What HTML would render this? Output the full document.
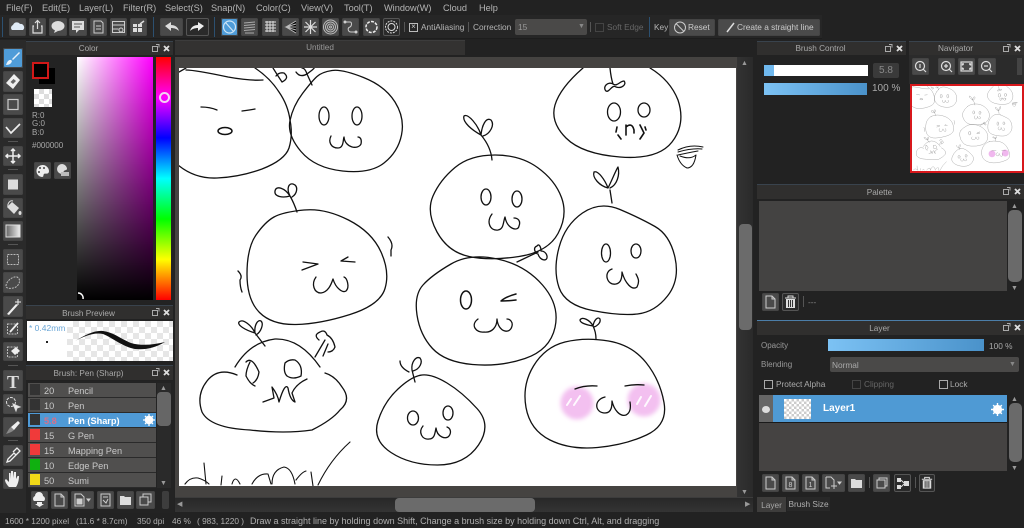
<!DOCTYPE html>
<html style="background:#222"><head><meta charset="utf-8"><title>MediBang</title>
<style>
html,body{margin:0;padding:0;background:#222;width:1024px;height:528px;overflow:hidden}
body{position:relative;font-family:"Liberation Sans","DejaVu Sans",sans-serif;font-size:8.3px;color:#bbb;filter:blur(.3px)}
.a{position:absolute}
.t{position:absolute;white-space:nowrap;line-height:12px}
.b{position:absolute;background:#4a4a4a;border-radius:2px;box-shadow:inset 0 0 0 1px #444}
.b svg,.f{position:absolute;left:0;top:0;width:100%;height:100%}
.d{background:#2a2a2a;box-shadow:inset 0 0 0 1px #555}
.tb{position:absolute;background:#302f2e;border-top:1px solid #39434d;color:#aaa;text-align:center;line-height:14px;font-size:8.2px;padding-right:22px;box-sizing:border-box}
.ctl{position:absolute;top:1px;right:3px;width:20px;height:12px}
.row{position:absolute;left:28px;width:128px;height:14px;background:#504f4e;border-bottom:1px solid #2a2a2a;color:#c8c8c8;font-size:9.2px;line-height:14px}
.row i{position:absolute;left:2px;top:1px;width:10px;height:11px;background:#333;display:block}
.row b{position:absolute;left:16px;top:1px;font-weight:normal}
.row u{position:absolute;left:40px;top:1px;text-decoration:none}
.cb{position:absolute;width:7px;height:7px;border:1px solid #aaa}
</style></head><body>

<!-- menu -->
<div class="t" style="left:6px;top:2px;font-size:9.2px;color:#b5b5b5">File(F)</div>
<div class="t" style="left:42px;top:2px;font-size:9.2px;color:#b5b5b5">Edit(E)</div>
<div class="t" style="left:79px;top:2px;font-size:9.2px;color:#b5b5b5">Layer(L)</div>
<div class="t" style="left:123px;top:2px;font-size:9.2px;color:#b5b5b5">Filter(R)</div>
<div class="t" style="left:165px;top:2px;font-size:9.2px;color:#b5b5b5">Select(S)</div>
<div class="t" style="left:211px;top:2px;font-size:9.2px;color:#b5b5b5">Snap(N)</div>
<div class="t" style="left:256px;top:2px;font-size:9.2px;color:#b5b5b5">Color(C)</div>
<div class="t" style="left:301px;top:2px;font-size:9.2px;color:#b5b5b5">View(V)</div>
<div class="t" style="left:344px;top:2px;font-size:9.2px;color:#b5b5b5">Tool(T)</div>
<div class="t" style="left:384px;top:2px;font-size:9.2px;color:#b5b5b5">Window(W)</div>
<div class="t" style="left:443px;top:2px;font-size:9.2px;color:#b5b5b5">Cloud</div>
<div class="t" style="left:479px;top:2px;font-size:9.2px;color:#b5b5b5">Help</div>

<!-- toolbar -->
<div class="a" style="left:0;top:15px;width:822px;height:23px;background:#262626;border-bottom:1px solid #1d1d1d"></div>
<div class="a" style="left:2px;top:17px;width:1px;height:20px;background:#2c5070"></div>
<div class="a" style="left:153px;top:17px;width:1px;height:20px;background:#2c5070"></div>
<div class="a" style="left:214px;top:17px;width:1px;height:20px;background:#2c5070"></div>
<div class="a" style="left:649px;top:17px;width:1px;height:20px;background:#2c5070"></div>

<div class="b" style="left:9px;top:18px;width:17px;height:18px"><svg viewBox="0 0 17 18"><path d="M3 12a3 3 0 0 1 1-5 4 4 0 0 1 7-1 3.5 3.5 0 0 1 3 6z" fill="#dfeaf5"/></svg></div>
<div class="b" style="left:29px;top:18px;width:17px;height:18px"><svg viewBox="0 0 17 18" fill="none" stroke="#ddd" stroke-width="1.2"><path d="M5 8H4v7h9V8h-1M8.500 11V3M6 5l2.500-2.500L11 5"/></svg></div>
<div class="b" style="left:49px;top:18px;width:18px;height:18px"><svg viewBox="0 0 18 18"><ellipse cx="9" cy="8" rx="6.500" ry="5" fill="#ddd"/><path d="M6 12l-1 3 4-2z" fill="#ddd"/></svg></div>
<div class="b" style="left:69px;top:18px;width:18px;height:18px"><svg viewBox="0 0 18 18"><path d="M3 3h12v9h-5l-3 3v-3H3z" fill="#ddd"/><path d="M5 6h8M5 9h6" stroke="#555"/></svg></div>
<div class="b" style="left:90px;top:18px;width:17px;height:18px"><svg viewBox="0 0 17 18" fill="none" stroke="#ccc"><path d="M4 3h7l2 2v10H4zM6 8h5M6 11h5"/></svg></div>
<div class="b" style="left:110px;top:18px;width:17px;height:18px"><svg viewBox="0 0 17 18" fill="none" stroke="#ccc"><path d="M2.500 3.500h12v11h-12zM2.500 7h12M2.500 11h6"/><circle cx="11" cy="12" r="2"/></svg></div>
<div class="b" style="left:130px;top:18px;width:17px;height:18px"><svg viewBox="0 0 17 18"><path d="M3 6h4v3H3zM8 6h4v3H8zM3 10h4v4H3zM8 10h4v4H8z" fill="#ddd"/><path d="M10 6l4-3" stroke="#ddd" stroke-width="1.500"/></svg></div>
<div class="b" style="left:160px;top:18px;width:23px;height:18px"><svg viewBox="0 0 23 18"><path d="M5 8l6-4v3c4 0 7 2 8 6-2-2-5-3-8-3v3z" fill="#ddd"/></svg></div>
<div class="b d" style="left:186px;top:18px;width:23px;height:18px"><svg viewBox="0 0 23 18"><path d="M18 8l-6-4v3c-4 0-7 2-8 6 2-2 5-3 8-3v3z" fill="#eee"/></svg></div>
<div class="b" style="left:221px;top:18px;width:17px;height:18px;background:#4f9cd8"><svg viewBox="0 0 17 18" fill="none" stroke="#cde4f5" stroke-width="1.200"><circle cx="8.500" cy="9" r="6"/><path d="M4.500 4.500l8 9"/></svg></div>
<div class="b" style="left:241px;top:18px;width:17px;height:18px"><svg viewBox="0 0 17 18" stroke="#aaa"><path d="M3 5l11-1M3 7.500l11-1M3 10l11-1M3 12.500l11-1M4 15h9"/></svg></div>
<div class="b" style="left:262px;top:18px;width:17px;height:18px"><svg viewBox="0 0 17 18" stroke="#ddd"><path d="M3 4h11M3 7h11M3 10h11M3 13h11M5 3v11M8 3v11M11 3v11"/></svg></div>
<div class="b" style="left:282px;top:18px;width:17px;height:18px"><svg viewBox="0 0 17 18" stroke="#bbb"><path d="M14 3L4 9l10 6M14 6L4 9l10 3M14 9H4"/></svg></div>
<div class="b" style="left:302px;top:18px;width:17px;height:18px"><svg viewBox="0 0 17 18" stroke="#ddd" stroke-width="1.200"><path d="M8.500 2v14M2 9h13M3.500 4l10 10M13.500 4l-10 10"/></svg></div>
<div class="b" style="left:322px;top:18px;width:17px;height:18px"><svg viewBox="0 0 17 18" fill="none" stroke="#bbb"><circle cx="8.500" cy="9" r="7"/><circle cx="8.500" cy="9" r="5"/><circle cx="8.500" cy="9" r="3"/><circle cx="8.500" cy="9" r="1"/></svg></div>
<div class="b" style="left:342px;top:18px;width:17px;height:18px"><svg viewBox="0 0 17 18" fill="none" stroke="#ccc"><path d="M3 4h5c2 0 2 4 0 5-3 1-2 5 1 5h5"/><circle cx="3" cy="4" r="1" fill="#ddd"/><circle cx="14" cy="14" r="1" fill="#ddd"/></svg></div>
<div class="b" style="left:363px;top:18px;width:17px;height:18px"><svg viewBox="0 0 17 18" fill="none" stroke="#eee" stroke-width="1.500"><circle cx="8.500" cy="9" r="5.500" stroke-dasharray="3 1.200"/></svg></div>
<div class="b d" style="left:383px;top:18px;width:17px;height:18px"><svg viewBox="0 0 17 18" fill="none" stroke="#ddd"><circle cx="8.500" cy="9" r="6" stroke-dasharray="2 1"/><circle cx="8.500" cy="9" r="3.500"/></svg></div>
<div class="a" style="left:404px;top:22px;width:1px;height:10px;background:#555"></div>
<div class="cb" style="left:409px;top:23px;border-color:#bbb;width:7px;height:7px"></div>
<div class="t" style="left:409px;top:21px;color:#ccc;font-size:8px;width:9px;text-align:center">×</div>
<div class="t" style="left:421px;top:21px;color:#b5b5b5">AntiAliasing</div>
<div class="a" style="left:468px;top:22px;width:1px;height:10px;background:#555"></div>
<div class="t" style="left:473px;top:21px;color:#b5b5b5">Correction</div>
<div class="a" style="left:515px;top:19px;width:72px;height:16px;background:#4a4948;border-radius:2px"></div>
<div class="t" style="left:518px;top:21px;color:#999">15</div>
<div class="t" style="left:578px;top:21px;color:#888;font-size:7px">▼</div>
<div class="a" style="left:590px;top:22px;width:1px;height:10px;background:#555"></div>
<div class="cb" style="left:595px;top:23px;border-color:#444"></div>
<div class="t" style="left:607px;top:21px;color:#666">Soft Edge</div>
<div class="t" style="left:654px;top:21px;color:#b5b5b5">Key</div>
<div class="b" style="left:669px;top:19px;width:46px;height:17px"><svg viewBox="0 0 46 17" fill="none" stroke="#ccc" style="width:46px;height:17px"><circle cx="11" cy="8.500" r="5.500"/><path d="M7 4.500l8 8"/></svg></div>
<div class="t" style="left:688px;top:21px;color:#ccc">Reset</div>
<div class="b" style="left:718px;top:19px;width:102px;height:17px"></div>
<svg class="a" style="left:724px;top:21px;width:14px;height:13px" viewBox="0 0 14 13"><path d="M3 11L10 2" stroke="#ddd" stroke-width="1.500"/></svg>
<div class="t" style="left:737px;top:21px;color:#ccc">Create a straight line</div>

<!-- tool strip -->
<div class="a" style="left:0;top:40px;width:26px;height:473px;background:#2a2a2a"></div>
<div class="b" style="left:3px;top:48px;width:20px;height:20px;background:#4f9cd8"><svg viewBox="0 0 20 20"><path d="M3 17Q5 11 8 12L9 13Q8 17 3 17ZM9 11L16 4L17 5L10 12Z" fill="#e8f2fa"/></svg></div>
<div class="b" style="left:3px;top:71px;width:20px;height:21px"><svg viewBox="0 0 20 21"><path d="M11 3l6 6-7 9-7-6z" fill="#eee"/><path d="M10.500 8l2.500 2-3 3-2.500-2z" fill="#666"/></svg></div>
<div class="b" style="left:3px;top:94px;width:20px;height:21px"><svg viewBox="0 0 20 21" fill="none" stroke="#ccc" stroke-width="1.200"><rect x="5" y="5.500" width="10" height="10"/></svg></div>
<div class="b" style="left:3px;top:118px;width:20px;height:20px"><svg viewBox="0 0 20 20" fill="none" stroke="#eee" stroke-width="1.700"><path d="M3 9l5 6 9-9"/></svg></div>
<div class="a" style="left:8px;top:141px;width:10px;height:1px;background:#555"></div>
<div class="b" style="left:3px;top:146px;width:20px;height:20px"><svg viewBox="0 0 20 20" fill="none" stroke="#eee" stroke-width="1.500"><path d="M10 3v14M3 10h14M8 5l2-2 2 2M8 15l2 2 2-2M5 8l-2 2 2 2M15 8l2 2-2 2"/></svg></div>
<div class="a" style="left:8px;top:169px;width:10px;height:1px;background:#555"></div>
<div class="b" style="left:3px;top:174px;width:20px;height:21px"><svg viewBox="0 0 20 21"><rect x="5" y="5.500" width="10" height="10" fill="#ddd"/></svg></div>
<div class="b" style="left:3px;top:198px;width:20px;height:20px"><svg viewBox="0 0 20 20"><path d="M4 9l5-5 7 6-5 6z" fill="#ddd"/><path d="M5 9a4 5 0 0 1 5-6" fill="none" stroke="#ddd"/><ellipse cx="17" cy="15" rx="1.500" ry="2" fill="#ddd"/></svg></div>
<div class="b" style="left:3px;top:221px;width:20px;height:20px"><svg viewBox="0 0 20 20"><defs><linearGradient id="g1"><stop offset="0" stop-color="#666"/><stop offset="1" stop-color="#eee"/></linearGradient></defs><rect x="3" y="4" width="14" height="12" fill="url(#g1)" stroke="#ddd"/></svg></div>
<div class="a" style="left:8px;top:244px;width:10px;height:1px;background:#555"></div>
<div class="b" style="left:3px;top:249px;width:20px;height:21px"><svg viewBox="0 0 20 21" fill="none" stroke="#bbb" stroke-dasharray="2 1"><rect x="4.500" y="5.500" width="11" height="10"/></svg></div>
<div class="b" style="left:3px;top:272px;width:20px;height:21px"><svg viewBox="0 0 20 21" fill="none" stroke="#bbb" stroke-dasharray="2 1"><path d="M3 14c0-4 6-10 11-9 4 2 3 7-1 10-4 2-10 2-10-1z"/></svg></div>
<div class="b" style="left:3px;top:296px;width:20px;height:21px"><svg viewBox="0 0 20 21"><path d="M4 18L13 8l2 1-9 10z" fill="#eee"/><path d="M15 3v3M12 6h6M15 6v3" stroke="#eee"/></svg></div>
<div class="b" style="left:3px;top:319px;width:20px;height:19px"><svg viewBox="0 0 20 19" fill="none" stroke="#bbb" stroke-dasharray="2 1"><rect x="4.500" y="5" width="10" height="10"/><path d="M7 13l8-9" stroke="#eee" stroke-width="1.800" stroke-dasharray="none"/></svg></div>
<div class="b" style="left:3px;top:342px;width:20px;height:19px"><svg viewBox="0 0 20 19" fill="none" stroke="#bbb" stroke-dasharray="2 1"><rect x="4.500" y="5" width="10" height="10"/><path d="M8 9l5-4 4 4-5 4z" fill="#eee" stroke="none"/></svg></div>
<div class="a" style="left:8px;top:365px;width:10px;height:1px;background:#555"></div>
<div class="b" style="left:3px;top:370px;width:20px;height:21px"><div class="t" style="left:0;width:20px;text-align:center;top:2px;line-height:18px;font:bold 18px 'Liberation Serif',serif;color:#ddd">T</div></div>
<div class="b" style="left:3px;top:394px;width:20px;height:20px"><svg viewBox="0 0 20 20" fill="none" stroke="#ddd"><circle cx="8" cy="8" r="4.500" stroke-dasharray="3 1"/><path d="M10 10l7 3-3 1-1 3z" fill="#eee"/></svg></div>
<div class="b" style="left:3px;top:417px;width:20px;height:20px"><svg viewBox="0 0 20 20"><path d="M3 17c2-3 3-6 5-7l3 3c-2 2-5 3-8 4z" fill="#888"/><path d="M8 10l7-6 2 2-6 7z" fill="#eee"/></svg></div>
<div class="a" style="left:8px;top:440px;width:10px;height:1px;background:#555"></div>
<div class="b" style="left:3px;top:445px;width:20px;height:21px"><svg viewBox="0 0 20 21" fill="none" stroke="#eee" stroke-width="1.300"><path d="M4 17l1-3 6-6 2 2-6 6zM10 7l4-4 3 3-4 4"/></svg></div>
<div class="b" style="left:3px;top:469px;width:20px;height:20px"><svg viewBox="0 0 20 20" fill="#eee"><path d="M6 18c-2-2-4-5-4-7l1-1 3 3 0-9h1.500l.5 6V2h2l.5 7 .5-6h2l0 7 1.500-3h1.500c0 4-1 8-3 11z"/></svg></div>

<!-- colour panel -->
<div class="tb" style="left:26px;top:41px;width:147px;height:14px">Color
<svg class="ctl" viewBox="0 0 20 12"><path d="M2.500 3.500h5v5h-5zM6 1.500h3v3" fill="none" stroke="#aaa"/><path d="M14 3l5 5M19 3l-5 5" stroke="#ddd" stroke-width="1.800"/></svg></div>
<div class="a" style="left:26px;top:55px;width:148px;height:249px;background:#232323"></div>
<div class="a" style="left:39px;top:68px;width:16px;height:16px;background:#000"></div>
<div class="a" style="left:32px;top:62px;width:13px;height:13px;background:#000;border:2px solid #d01818"></div>
<div class="a" style="left:34px;top:89px;width:18px;height:18px;background:#fff;background-image:linear-gradient(45deg,#ddd 25%,transparent 25%,transparent 75%,#ddd 75%),linear-gradient(45deg,#ddd 25%,transparent 25%,transparent 75%,#ddd 75%);background-size:10px 10px;background-position:0 0,5px 5px"></div>
<div class="t" style="left:32px;top:110px;color:#a8a8a8;font-size:8px">R:0</div>
<div class="t" style="left:32px;top:118px;color:#a8a8a8;font-size:8px">G:0</div>
<div class="t" style="left:32px;top:127px;color:#a8a8a8;font-size:8px">B:0</div>
<div class="t" style="left:32px;top:140px;color:#a8a8a8;font-size:8px">#000000</div>
<div class="b" style="left:34px;top:162px;width:17px;height:17px"><svg viewBox="0 0 17 17"><path d="M9 3a6 6 0 1 0-1 12c2 0 1-2 2-3s5 1 5-3c0-3-3-6-6-6z" fill="#eee"/><circle cx="6" cy="6" r="1" fill="#444"/><circle cx="10" cy="6" r="1" fill="#444"/><circle cx="5" cy="10" r="1" fill="#444"/></svg></div>
<div class="b" style="left:54px;top:162px;width:17px;height:17px"><svg viewBox="0 0 17 17"><path d="M8 2a5 5 0 1 0 0 10c2-1 1-2 2-3s3-1 3-2c0-3-3-5-5-5z" fill="#ddd"/><rect x="7" y="10" width="8" height="4" fill="#bbb"/></svg></div>
<div class="a" style="left:77px;top:57px;width:76px;height:243px;background:linear-gradient(to bottom,rgba(0,0,0,0),#000),linear-gradient(to right,#fff,#f0f)"></div>
<svg class="a" style="left:77px;top:292px;width:10px;height:8px" viewBox="0 0 10 8"><path d="M1 1a5 5 0 0 1 5 6" fill="none" stroke="#fff" stroke-width="1.500"/></svg>
<div class="a" style="left:156px;top:57px;width:15px;height:243px;background:linear-gradient(to bottom,#f00 0%,#f0f 16.7%,#00f 33.3%,#0ff 50%,#0f0 66.7%,#ff0 83.3%,#f00 100%)"></div>
<div class="a" style="left:159px;top:92px;width:7px;height:7px;border:2px solid #f4d0f4;border-radius:50%"></div>

<!-- brush preview -->
<div class="tb" style="left:26px;top:305px;width:147px;height:14px;line-height:15px">Brush Preview
<svg class="ctl" viewBox="0 0 20 12"><path d="M2.500 3.500h5v5h-5zM6 1.500h3v3" fill="none" stroke="#aaa"/><path d="M14 3l5 5M19 3l-5 5" stroke="#ddd" stroke-width="1.800"/></svg></div>
<div class="a" style="left:27px;top:321px;width:40px;height:40px;background:#fff"></div>
<div class="t" style="left:29px;top:322px;color:#6aa6d6;font-size:8.500px">* 0.42mm</div>
<div class="a" style="left:46px;top:341px;width:2px;height:2px;background:#222"></div>
<div class="a" style="left:67px;top:321px;width:106px;height:40px;background:#fff;background-image:linear-gradient(45deg,#e6e6e6 25%,transparent 25%,transparent 75%,#e6e6e6 75%),linear-gradient(45deg,#e6e6e6 25%,transparent 25%,transparent 75%,#e6e6e6 75%);background-size:12px 12px;background-position:0 0,6px 6px"></div>
<svg class="a" style="left:67px;top:321px;width:106px;height:40px" viewBox="0 0 106 40"><path d="M8 20C18 14 28 9 36 10C46 11 54 18 64 22C74 25 86 24 98 21C88 27 78 29 68 28C56 26 46 17 36 13C26 11 16 16 8 20Z" fill="#111"/></svg>

<!-- brush list -->
<div class="tb" style="left:26px;top:365px;width:147px;height:15px;line-height:15px">Brush: Pen (Sharp)
<svg class="ctl" viewBox="0 0 20 12"><path d="M2.500 3.500h5v5h-5zM6 1.500h3v3" fill="none" stroke="#aaa"/><path d="M14 3l5 5M19 3l-5 5" stroke="#ddd" stroke-width="1.800"/></svg></div>
<div class="a" style="left:26px;top:381px;width:148px;height:132px;background:#232323"></div>
<div class="row" style="top:383px"><i></i><b>20</b><u>Pencil</u></div>
<div class="row" style="top:398px"><i></i><b>10</b><u>Pen</u></div>
<div class="row" style="top:413px;background:#4f9ad6;color:#fff;font-weight:bold"><i></i><b style="color:#d87088;font-weight:bold">5.8</b><u>Pen (Sharp)</u><svg class="a" style="left:115px;top:1px;width:12px;height:12px" viewBox="0 0 12 12"><circle cx="6" cy="6" r="3" fill="none" stroke="#fff" stroke-width="2.500"/><path d="M6 0v12M0 6h12M2 2l8 8M10 2l-8 8" stroke="#fff" stroke-width="1.300"/></svg></div>
<div class="row" style="top:428px"><i style="background:#f03a3a"></i><b>15</b><u>G Pen</u></div>
<div class="row" style="top:443px"><i style="background:#f03a3a"></i><b>15</b><u>Mapping Pen</u></div>
<div class="row" style="top:458px"><i style="background:#10b010"></i><b>10</b><u>Edge Pen</u></div>
<div class="row" style="top:473px"><i style="background:#f0d818"></i><b>50</b><u>Sumi</u></div>
<div class="a" style="left:157px;top:383px;width:14px;height:105px;background:#2a2a2a"></div>
<div class="a" style="left:157px;top:392px;width:14px;height:34px;background:#666;border-radius:4px"></div>
<div class="t" style="left:160px;top:383px;font-size:7px;color:#999">▲</div>
<div class="t" style="left:160px;top:478px;font-size:7px;color:#999">▼</div>
<div class="b" style="left:31px;top:491px;width:17px;height:18px"><svg viewBox="0 0 17 18"><path d="M3 10a3 3 0 0 1 1-5 4 4 0 0 1 8 0 3 3 0 0 1 1 5z" fill="#eee"/><path d="M6 11h5v2h2l-4.500 3L4 13h2z" fill="#eee"/></svg></div>
<div class="b" style="left:51px;top:491px;width:17px;height:18px"><svg viewBox="0 0 17 18" fill="none" stroke="#ccc"><path d="M4 3h6l3 3v9H4zM10 3v3h3"/></svg></div>
<div class="b" style="left:71px;top:491px;width:23px;height:18px"><svg viewBox="0 0 23 18" fill="none" stroke="#ccc"><path d="M4 3h6l3 3v9H4z"/><rect x="6" y="8" width="5" height="5" fill="#ccc"/><path d="M16 8l3 0-1.500 2z" fill="#ddd"/></svg></div>
<div class="b" style="left:97px;top:491px;width:17px;height:18px"><svg viewBox="0 0 17 18" fill="none" stroke="#ccc"><path d="M4 3h9v12H4zM6 6h5M6 9l3 3 2-4"/></svg></div>
<div class="b" style="left:117px;top:491px;width:17px;height:18px"><svg viewBox="0 0 17 18"><path d="M3 5h4l1 1h6v8H3z" fill="#ddd"/></svg></div>
<div class="b" style="left:136px;top:491px;width:19px;height:18px"><svg viewBox="0 0 19 18" fill="none" stroke="#ccc"><path d="M4 6h8v8H4zM7 6V3h8v8h-3"/></svg></div>
<div class="a" style="left:162px;top:491px;width:7px;height:18px;background:#3d3d3d;border-radius:2px"></div>

<!-- canvas area -->
<div class="a" style="left:175px;top:40px;width:290px;height:14px;background:#333231;color:#999;text-align:center;line-height:14px;font-size:8.2px;border-top:1px solid #3c3c3c">Untitled</div>
<div class="a" style="left:175px;top:57px;width:578px;height:440px;background:#454341"></div>
<div class="a" style="left:179px;top:68px;width:557px;height:418px;background:#fff;overflow:hidden"></div>
<!-- scrollbars -->
<div class="a" style="left:737px;top:57px;width:16px;height:440px;background:linear-gradient(to right,#333,#2a2a2a)"></div>
<div class="a" style="left:739px;top:224px;width:13px;height:106px;background:#6b6b6b;border-radius:4px"></div>
<div class="t" style="left:741px;top:58px;font-size:7px;color:#999">▲</div>
<div class="t" style="left:741px;top:487px;font-size:7px;color:#999">▼</div>
<div class="a" style="left:175px;top:497px;width:578px;height:15px;background:linear-gradient(to bottom,#282828,#343434);border-top:1px solid #3c3c3c;box-sizing:border-box"></div>
<div class="a" style="left:395px;top:498px;width:140px;height:14px;background:#6b6b6b;border-radius:4px"></div>
<div class="t" style="left:177px;top:499px;font-size:7px;color:#999">◀</div>
<div class="t" style="left:745px;top:499px;font-size:7px;color:#999">▶</div>

<!-- drawing -->
<svg class="a" style="left:179px;top:68px;width:557px;height:418px;overflow:hidden" viewBox="179 68 557 418">
<defs><filter id="bl" x="-30%" y="-30%" width="160%" height="160%"><feGaussianBlur stdDeviation="2"/></filter>
<g id="art" fill="none" stroke="#111" stroke-width="1.300" stroke-linecap="round" stroke-linejoin="round">
<!-- A -->
<path d="M255,68Q270,78 279,92Q288,105 290,120Q293,135 289,148Q285,160 262,169Q240,177 217,178Q195,179 178,165" />
<path d="M186,70Q195,70 228,77Q250,81 263,80M179,72L186,68" />
<path d="M201,107Q210,107 217,110M242,111Q250,110 255,109" />
<ellipse cx="225" cy="131" rx="7" ry="3.500" stroke-width="1.500"/>
<path d="M273,68Q278,76 282,82Q290,78 284,73Q279,72 276,76M296,72Q300,78 307,74Q305,68 302,68M307,74Q315,68 314,68M307,74L312,85" />
<!-- B -->
<path d="M302.500,93.500Q293,106 290,120.500Q287,135 301,151.500Q315,168 342.500,171Q370,174 384,163Q398,152 401.500,135Q405,118 395,102Q385,86 363.500,77.500Q342,69 332,70.500Q322,72 317,76.500Q312,81 302.500,93.500Z" />
<ellipse cx="324" cy="116" rx="5" ry="9"/><ellipse cx="357" cy="116" rx="5" ry="9"/>
<path d="M331,136C328,142 331,148 338,148C344,148 343,139 344,137C345,148 358,150 361,144C362,139 360,137 358,137" />
<!-- C -->
<path d="M274,217Q283,212 304,210Q325,208 348.500,220Q372,232 381,252Q390,272 385,288.500Q380,305 350,314.500Q320,324 296,324.500Q272,325 259.500,312.500Q247,300 247,274Q247,248 256,235Q265,222 274,217Z" />
<path d="M297,212Q294,203 290,196M290,196C283,198 274,197 275,191C276,185 285,188 290,196M290,196C286,188 289,183 293,184C299,186 297,194 292,197" />
<path d="M303,262L318,264L302,270M348,257L341,261L355,262" />
<path d="M316,277C311,284 314,293 321,293C328,292 331,285 333,279C336,289 343,293 346,291C350,287 347,278 344,277" />
<path d="M238,271Q243,276 240,280Q240,287 242,292M388,237Q394,244 391,250L391,256" />
<!-- D -->
<path d="M455,167.500Q470,155 495,155Q520,155 537.500,167.500Q555,180 561.500,197.500Q568,215 558,233.500Q548,252 519,256.500Q490,261 469,256.500Q448,252 437,232Q426,212 433,196Q440,180 455,167.500Z" />
<path d="M492,160Q491,147 481,135M481,135C472,130 462,122 464,116C468,113 478,125 481,135M481,135C482,125 486,117 491,120C495,125 490,134 483,136" />
<ellipse cx="486" cy="197" rx="5" ry="8"/><ellipse cx="517" cy="199" rx="5" ry="8"/>
<path d="M492,214C486,222 490,231 498,230C504,229 503,222 505,217C507,229 518,232 519,226C521,221 518,218 514,218" />
<path d="M517,262L538,252M537,246C532,248 536,254 538,254C540,261 548,262 547,256C546,252 543,251 541,251C541,247 539,243 537,246" />
<!-- E -->
<path d="M583,68Q560,88 555,105Q550,122 566,138Q582,154 620,157Q658,160 672,142Q686,124 678,100Q670,80 650,68" />
<path d="M610,68Q611,78 613,84M606,91C602,87 608,81 613,84C617,87 620,81 624,81C627,84 622,89 616,87C612,84 609,93 606,91" />
<ellipse cx="614" cy="112" rx="6.500" ry="9"/><ellipse cx="644" cy="110" rx="6" ry="7"/>
<path d="M617,127L616,132M618,135L621,139M626,125L626,135M626,127Q632,122 634,130L634,133M640,125L644,133L640,139M645,127L646,130" stroke-width="1.600"/>
<path d="M678,150Q690,144 703,147M678,152Q692,148 702,149M678,155Q692,152 698,151M677,155Q680,165 687,168Q694,168 696,155Q690,160 680,156" stroke-width="1"/>
<!-- F -->
<path d="M620,209.500Q600,201 582.500,213Q565,225 559,247.500Q553,270 559,287.500Q565,305 592.500,310.500Q620,316 637.500,314Q655,312 667.500,296Q680,280 675,257.500Q670,235 655,226.500Q640,218 620,209.500Z" />
<path d="M612,203L610,190M608,188C600,186 592,178 594,172C598,170 605,180 608,188M608,188C612,180 616,170 618,167C620,175 617,185 610,188" />
<ellipse cx="606" cy="253" rx="4.500" ry="9"/><ellipse cx="636" cy="251" rx="5" ry="7"/>
<path d="M612,269C603,272 607,286 616,284C621,283 622,278 622,272C625,283 632,291 637,287C640,281 638,278 636,274" />
<!-- G -->
<path d="M423,285Q432,275 451,264Q470,253 497.500,259Q525,265 542.500,285Q560,305 555,327.500Q550,350 525,358.500Q500,367 472.500,364.500Q445,362 432.500,348.500Q420,335 417,315Q414,295 423,285Z" />
<ellipse cx="466" cy="300" rx="5.500" ry="9" stroke-width="1.500"/>
<path d="M516,294Q505,297 501,301Q508,301 516,300" stroke-width="1.500"/>
<path d="M478,319C470,325 476,333 484,332C492,333 497,327 497,319C498,332 510,335 512,326C513,322 510,319 507,319" />
<!-- H -->
<path d="M235,367Q250,342 275,339Q300,338 320,367" />
<path d="M237,375Q218,367 207,381Q196,395 202,412Q210,428 250,430Q285,434 312,430Q332,420 340,410Q352,400 342,387Q335,376 325,373" />
<path d="M265,346L255,333M255,333C245,330 237,325 239,322C243,318 252,326 255,333M255,333C254,325 258,319 261,321C264,324 261,332 256,335" />
<path d="M315,357L325,340M319,340Q313,335 320,332Q325,329 327,335Q333,338 335,347Q333,352 328,352M328,344L323,356" />
<path d="M250,362Q246,370 246,376Q250,384 255,386M246,362Q252,356 259,372Q258,380 253,383" />
<path d="M285,363Q283,372 287,376Q293,380 301,376Q303,365 295,360Q289,359 285,363Z" />
<path d="M263,402L274,398L272,387Q278,395 279,402Q285,382 288,388Q290,400 295,402L292,393Q296,384 307,379" />
<!-- I -->
<path d="M422,375Q412,376 398,389Q384,402 378,421Q372,440 391,452.500Q410,465 437.500,465Q465,465 478.500,445Q492,425 477,408.500Q462,392 447,383Q432,374 422,375Z" />
<path d="M415,382L412,370M409,372C403,369 400,365 400,361M412,370C411,362 416,356 420,358C423,362 420,369 413,371" />
<ellipse cx="413" cy="418" rx="5.500" ry="7"/><ellipse cx="448" cy="413" rx="5" ry="7"/>
<path d="M423,426C418,432 422,440 429,439C435,439 435,432 436,428C437,437 446,440 449,436C452,432 450,428 447,427" />
<!-- J -->
<path d="M565,342Q585,337 608.500,341Q632,345 646,362.500Q660,380 664,402.500Q668,425 646.500,435Q625,445 597.500,447.500Q570,450 550,440Q530,430 526,407.500Q522,385 533.500,366Q545,347 565,342Z" />
<path d="M596,339Q596,332 593,326M593,326C587,325 580,323 580,320C582,316 590,320 593,326M593,326C594,320 598,316 600,319C601,323 597,326 594,327" />
<path d="M575,389Q585,385 597,386M625,386Q635,384 644,385" />
<path d="M605,397C593,400 595,413 605,413C612,413 612,405 612,401C614,410 620,417 626,415C630,413 631,408 630,402" />
<!-- grass -->
<path d="M185,484Q190,477 198,478Q205,480 209,484M204,463L206,484M221,485L222,476M232,484Q235,474 240,484M252,484Q258,473 268,474L271,484M272,484Q272,470 284,467Q292,468 295,484M296,480Q302,472 306,471M311,472L313,486M318,485Q330,460 350,442" stroke-width="1.100"/>
</g></defs>
<circle cx="577" cy="403" r="16.500" fill="#f3c0f0" filter="url(#bl)"/>
<circle cx="644" cy="400" r="16.500" fill="#f3c0f0" filter="url(#bl)"/>
<path d="M567,405L571,399M574,405L580,396M637,404L641,397M645,406L651,396" stroke="#fff" stroke-width="2" fill="none" stroke-linecap="round" opacity=".9"/>
<use href="#art"/>
</svg>

<!-- status -->
<div class="t" style="left:5px;top:515px;font-size:8.3px;color:#b0b0b0">1600 * 1200 pixel</div>
<div class="t" style="left:76px;top:515px;font-size:8.3px;color:#b0b0b0">(11.6 * 8.7cm)</div>
<div class="t" style="left:137px;top:515px;font-size:8.3px;color:#b0b0b0">350 dpi</div>
<div class="t" style="left:172px;top:515px;font-size:8.3px;color:#b0b0b0">46 %</div>
<div class="t" style="left:197px;top:515px;font-size:8.3px;color:#b0b0b0">( 983, 1220 )</div>
<div class="t" style="left:250px;top:515px;font-size:9px;color:#b0b0b0">Draw a straight line by holding down Shift, Change a brush size by holding down Ctrl, Alt, and dragging</div>

<!-- Brush Control -->
<div class="tb" style="left:757px;top:41px;width:149px;height:14px">Brush Control
<svg class="ctl" viewBox="0 0 20 12"><path d="M2.500 3.500h5v5h-5zM6 1.500h3v3" fill="none" stroke="#aaa"/><path d="M14 3l5 5M19 3l-5 5" stroke="#ddd" stroke-width="1.800"/></svg></div>
<div class="a" style="left:764px;top:65px;width:104px;height:11px;background:#fff"></div>
<div class="a" style="left:764px;top:65px;width:10px;height:11px;background:#6fb8ee"></div>
<div class="a" style="left:873px;top:63px;width:26px;height:15px;background:#3a3a3a;border-radius:2px;color:#8a8a8a;text-align:center;line-height:15px;font-size:10px">5.8</div>
<div class="a" style="left:764px;top:83px;width:103px;height:12px;background:linear-gradient(to right,#7cc2f4,#4a92ca)"></div>
<div class="t" style="left:872px;top:83px;color:#aaa;font-size:10px">100 %</div>

<!-- Navigator -->
<div class="tb" style="left:909px;top:41px;width:115px;height:14px">Navigator
<svg class="ctl" viewBox="0 0 20 12"><path d="M2.500 3.500h5v5h-5zM6 1.500h3v3" fill="none" stroke="#aaa"/><path d="M14 3l5 5M19 3l-5 5" stroke="#ddd" stroke-width="1.800"/></svg></div>
<div class="a" style="left:909px;top:55px;width:115px;height:29px;background:#2b2b2b"></div>
<div class="b" style="left:912px;top:58px;width:17px;height:17px"><svg viewBox="0 0 17 17" fill="none" stroke="#ddd" stroke-width="1.200"><circle cx="8" cy="8" r="4.500"/><path d="M11 11l3 3M8 6v4"/></svg></div>
<div class="b" style="left:938px;top:58px;width:17px;height:17px"><svg viewBox="0 0 17 17" fill="none" stroke="#ddd" stroke-width="1.200"><circle cx="8" cy="8" r="4.500"/><path d="M11 11l3 3M6 8h4M8 6v4"/></svg></div>
<div class="b" style="left:958px;top:58px;width:17px;height:17px"><svg viewBox="0 0 17 17" fill="none" stroke="#ddd" stroke-width="1.200"><rect x="3" y="4" width="11" height="9"/><path d="M6 6H4.500v1.500M11 6h1.500v1.500M6 11H4.500V9.500M11 11h1.500V9.500" stroke-width="1.500"/></svg></div>
<div class="b" style="left:978px;top:58px;width:18px;height:17px"><svg viewBox="0 0 18 17" fill="none" stroke="#ddd" stroke-width="1.200"><circle cx="8" cy="8" r="4.500"/><path d="M11 11l3 3M6 8h4"/></svg></div>
<div class="a" style="left:1017px;top:58px;width:5px;height:17px;background:#444"></div>
<div class="a" style="left:910px;top:84px;width:114px;height:89px;background:#fff;box-shadow:inset 0 0 0 2px #d8181c"></div>
<svg class="a" style="left:912px;top:86px;width:112px;height:85px;overflow:hidden" viewBox="179 68 557 418">
<circle cx="577" cy="403" r="17" fill="#f0b8ee"/><circle cx="643" cy="399" r="17" fill="#f0b8ee"/>
<use href="#art" opacity=".65"/></svg>

<!-- Palette -->
<div class="tb" style="left:757px;top:184px;width:267px;height:15px;line-height:15px">Palette
<svg class="ctl" viewBox="0 0 20 12"><path d="M2.500 3.500h5v5h-5zM6 1.500h3v3" fill="none" stroke="#aaa"/><path d="M14 3l5 5M19 3l-5 5" stroke="#ddd" stroke-width="1.800"/></svg></div>
<div class="a" style="left:759px;top:201px;width:248px;height:90px;background:#444342"></div>
<div class="a" style="left:1008px;top:210px;width:14px;height:72px;background:#6a6a6a;border-radius:5px"></div>
<div class="t" style="left:1011px;top:201px;font-size:7px;color:#999">▲</div>
<div class="t" style="left:1011px;top:283px;font-size:7px;color:#999">▼</div>
<div class="b" style="left:762px;top:293px;width:17px;height:18px"><svg viewBox="0 0 17 18" fill="none" stroke="#ccc"><path d="M4 3h6l3 3v9H4zM10 3v3h3"/></svg></div>
<div class="b d" style="left:782px;top:293px;width:17px;height:18px"><svg viewBox="0 0 17 18"><path d="M3 5h11M6 5V3h5v2" stroke="#ddd" fill="none"/><path d="M4 6h9v9H4z" fill="#ddd"/><path d="M6.500 7v7M8.500 7v7M10.500 7v7" stroke="#333"/></svg></div>
<div class="a" style="left:803px;top:296px;width:1px;height:11px;background:#555"></div>
<div class="t" style="left:808px;top:296px;color:#888">---</div>

<!-- Layer -->
<div class="tb" style="left:757px;top:320px;width:267px;height:15px;line-height:15px;border-top-color:#4c7ea8">Layer
<svg class="ctl" viewBox="0 0 20 12"><path d="M2.500 3.500h5v5h-5zM6 1.500h3v3" fill="none" stroke="#aaa"/><path d="M14 3l5 5M19 3l-5 5" stroke="#ddd" stroke-width="1.800"/></svg></div>
<div class="t" style="left:761px;top:340px;color:#999;font-size:8px">Opacity</div>
<div class="a" style="left:828px;top:339px;width:156px;height:12px;background:linear-gradient(to right,#7cc2f4,#4a92ca)"></div>
<div class="t" style="left:989px;top:340px;color:#aaa">100 %</div>
<div class="t" style="left:761px;top:359px;color:#999;font-size:8px">Blending</div>
<div class="a" style="left:830px;top:357px;width:189px;height:15px;background:#4a4948;border-radius:2px"></div>
<div class="t" style="left:832px;top:359px;color:#aaa">Normal</div>
<div class="t" style="left:1009px;top:359px;font-size:7px;color:#888">▼</div>
<div class="cb" style="left:764px;top:380px"></div>
<div class="t" style="left:776px;top:378px;color:#aaa">Protect Alpha</div>
<div class="cb" style="left:852px;top:380px;border-color:#444"></div>
<div class="t" style="left:864px;top:378px;color:#666">Clipping</div>
<div class="cb" style="left:939px;top:380px"></div>
<div class="t" style="left:950px;top:378px;color:#aaa">Lock</div>
<div class="a" style="left:759px;top:395px;width:248px;height:76px;background:#454342"></div>
<div class="a" style="left:759px;top:395px;width:248px;height:28px;background:#4f9ad4;border-bottom:1px solid #1a1a1a;box-sizing:border-box"></div>
<div class="a" style="left:759px;top:395px;width:14px;height:27px;background:#666"></div>
<div class="a" style="left:762px;top:406px;width:8px;height:7px;background:#ddd;border-radius:50%"></div>
<div class="a" style="left:784px;top:399px;width:27px;height:20px;background:#fff;background-image:linear-gradient(45deg,#ccc 25%,transparent 25%,transparent 75%,#ccc 75%),linear-gradient(45deg,#ccc 25%,transparent 25%,transparent 75%,#ccc 75%);background-size:5px 5px;background-position:0 0,2.500px 2.500px"></div>
<div class="t" style="left:823px;top:403px;color:#fff;font-weight:bold;font-size:10px">Layer1</div>
<svg class="a" style="left:991px;top:403px;width:13px;height:13px" viewBox="0 0 12 12"><circle cx="6" cy="6" r="3" fill="none" stroke="#fff" stroke-width="2.500"/><path d="M6 0v12M0 6h12M2 2l8 8M10 2l-8 8" stroke="#fff" stroke-width="1.300"/></svg>
<div class="a" style="left:1009px;top:403px;width:13px;height:59px;background:#6a6a6a;border-radius:5px"></div>
<div class="t" style="left:1011px;top:394px;font-size:7px;color:#999">▲</div>
<div class="t" style="left:1011px;top:463px;font-size:7px;color:#999">▼</div>
<div class="b" style="left:762px;top:474px;width:17px;height:18px"><svg viewBox="0 0 17 18" fill="none" stroke="#ccc"><path d="M4 3h6l3 3v9H4zM10 3v3h3"/></svg></div>
<div class="b" style="left:782px;top:474px;width:17px;height:18px"><svg viewBox="0 0 17 18" fill="none" stroke="#ccc"><path d="M4 3h6l3 3v9H4zM10 3v3h3"/><text x="8.500" y="13" font-size="7" fill="#ccc" stroke="none" text-anchor="middle">8</text></svg></div>
<div class="b" style="left:802px;top:474px;width:17px;height:18px"><svg viewBox="0 0 17 18" fill="none" stroke="#ccc"><path d="M4 3h6l3 3v9H4zM10 3v3h3"/><text x="8.500" y="13" font-size="7" fill="#ccc" stroke="none" text-anchor="middle">1</text></svg></div>
<div class="b" style="left:822px;top:474px;width:23px;height:18px"><svg viewBox="0 0 23 18" fill="none" stroke="#ccc"><path d="M4 3h5l3 3v3M4 3v11h4M9 12h6M12 9v6"/><path d="M16 8l3 0-1.500 2z" fill="#ddd"/></svg></div>
<div class="b" style="left:848px;top:474px;width:17px;height:18px"><svg viewBox="0 0 17 18"><path d="M3 5h4l1 1h6v8H3z" fill="#ddd"/></svg></div>
<div class="a" style="left:869px;top:477px;width:1px;height:11px;background:#555"></div>
<div class="b" style="left:873px;top:474px;width:17px;height:18px"><svg viewBox="0 0 17 18" fill="none" stroke="#ccc"><path d="M4 6h8v8H4zM6 6V4h8v8h-2"/></svg></div>
<div class="b d" style="left:894px;top:474px;width:17px;height:18px"><svg viewBox="0 0 17 18"><rect x="3" y="4" width="4" height="4" fill="#ddd"/><rect x="3" y="11" width="4" height="4" fill="#ddd"/><rect x="10" y="7" width="5" height="5" fill="#ddd"/><path d="M7 6l3 3M7 13l3-3" stroke="#ddd"/></svg></div>
<div class="a" style="left:915px;top:477px;width:1px;height:11px;background:#555"></div>
<div class="b d" style="left:919px;top:474px;width:16px;height:18px"><svg viewBox="0 0 17 18"><path d="M3 5h11M6 5V3h5v2" stroke="#ddd" fill="none"/><path d="M4 6h9v9H4z" fill="#ddd"/><path d="M6.500 7v7M8.500 7v7M10.500 7v7" stroke="#333"/></svg></div>
<div class="a" style="left:757px;top:497px;width:29px;height:15px;background:#3e3d3c;color:#a8a8a8;text-align:center;line-height:16px;font-size:8.3px;white-space:nowrap">Layer</div>
<div class="a" style="left:787px;top:497px;width:43px;height:14px;background:#282828;color:#b0b0b0;text-align:center;line-height:14px;font-size:8.3px;white-space:nowrap">Brush Size</div>
</body></html>
